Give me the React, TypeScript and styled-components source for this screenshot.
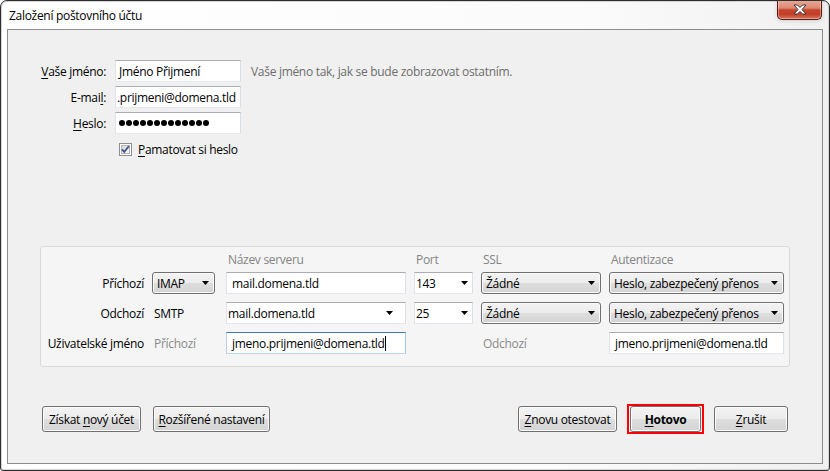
import React from "react";
import styled, { createGlobalStyle, css } from "styled-components";

const GlobalStyle = createGlobalStyle`
  html, body { margin: 0; padding: 0; background: #ffffff; }
  body {
    font-family: "Open Sans", "Noto Sans", "Liberation Sans", sans-serif;
    font-size: 12px;
    letter-spacing: -0.3px;
    color: #000;
  }
`;

const Window = styled.div`
  box-sizing: border-box;
  width: 830px;
  height: 471px;
  display: flex;
  flex-direction: column;
  border: 1px solid #2e2e2e;
  border-radius: 7px 7px 3px 3px;
  background: linear-gradient(to right, #ffffff 0%, #fbfbfb 70%, #f0f0f0 100%);
  box-shadow: inset 0 0 0 1px #d4d4d4;
  overflow: hidden;
`;

const TitleBar = styled.div`
  flex: none;
  height: 28px;
  display: flex;
  align-items: center;
  justify-content: space-between;
  padding: 0 7px 0 8px;
`;

const Title = styled.span`
  line-height: 16px;
  padding-top: 2px;
`;

const CloseButton = styled.div`
  align-self: flex-start;
  margin-top: -1px;
  box-sizing: border-box;
  width: 45px;
  height: 20px;
  border: 1px solid #5a1b10;
  border-top: none;
  border-radius: 0 0 5px 5px;
  background: linear-gradient(to bottom, #e9aa9a 0%, #dc8a76 42%, #c6452e 52%, #c23e28 75%, #d8765d 100%);
  box-shadow: inset 0 0 0 1px rgba(255, 255, 255, 0.35), 0 1px 4px rgba(0, 0, 0, 0.15);
  display: flex;
  align-items: center;
  justify-content: center;
`;

const Client = styled.div`
  flex: 1;
  min-height: 0;
  margin: 0 6px 6px 6px;
  border: 1px solid #8c8c8c;
  background: #f0f0f0;
  display: flex;
  flex-direction: column;
  padding-top: 30px;
`;

const AccountForm = styled.div`
  display: grid;
  grid-template-columns: 84px 126px auto;
  grid-auto-rows: 22px;
  column-gap: 9px;
  row-gap: 4px;
  margin-left: 14px;
  align-items: center;
`;

const FieldLabel = styled.div`
  text-align: right;
  white-space: nowrap;
`;

const Hint = styled.div`
  color: #6d6d6d;
  padding-left: 1px;
  white-space: nowrap;
`;

const Key = styled.span`
  text-decoration: underline;
  text-underline-offset: 2px;
`;

const TextBox = styled.div<{ $focused?: boolean; $end?: boolean; $pad?: number }>`
  box-sizing: border-box;
  height: 22px;
  display: flex;
  align-items: center;
  justify-content: ${(p) => (p.$end ? "flex-end" : "flex-start")};
  padding: 0 3px 0 ${(p) => (p.$pad ?? 3)}px;
  background: #ffffff;
  border: 1px solid;
  border-color: #abadb3 #dbdfe6 #e3e9ef #e2e3ea;
  white-space: nowrap;
  overflow: hidden;
  ${(p) =>
    p.$focused &&
    css`
      border-color: #3d7bad #a4c9e3 #b7d9ed #b5cfe7;
    `}
`;

const Combo = styled(TextBox)<{ $arrowGap?: number }>`
  justify-content: space-between;
  padding-right: ${(p) => p.$arrowGap ?? 4}px;
`;

const Caret = styled.span`
  width: 1px;
  height: 15px;
  background: #000;
`;

const Dots = styled.div`
  display: flex;
  gap: 1px;
`;

const Dot = styled.span`
  width: 6px;
  height: 6px;
  border-radius: 50%;
  background: #000;
`;

const CheckRow = styled.label`
  grid-column: 2 / 4;
  display: flex;
  align-items: center;
  gap: 6px;
  padding-left: 4px;
`;

const ServerPanel = styled.div`
  margin: 86px 32px 0 32px;
  border: 1px solid #dadada;
  border-radius: 3px;
  background: #f5f5f5;
  display: grid;
  grid-template-columns: 97px 66px 180px 59px 120px 175px;
  grid-template-rows: 25px 30px 30px 30px;
  column-gap: 8px;
  padding: 0 5px 4px 6px;
`;

const HeaderCell = styled.div`
  align-self: center;
  padding-left: 2px;
  color: #848484;
  white-space: nowrap;
`;

const RowLabel = styled.div`
  height: 22px;
  display: flex;
  align-items: center;
  justify-content: flex-end;
  white-space: nowrap;
`;

const PlainCell = styled.div<{ $muted?: boolean }>`
  height: 22px;
  display: flex;
  align-items: center;
  padding-left: 2px;
  white-space: nowrap;
  color: ${(p) => (p.$muted ? "#8a8a8a" : "#000")};
`;

const buttonFace = css`
  box-sizing: border-box;
  border: 1px solid #707070;
  border-radius: 3px;
  background: linear-gradient(to bottom, #f3f3f3 0%, #ececec 48%, #dedede 52%, #d3d3d3 100%);
  box-shadow: inset 0 0 0 1px #fbfbfb;
`;

const DropButton = styled.div<{ $w?: number }>`
  ${buttonFace};
  height: 22px;
  width: ${(p) => (p.$w ? `${p.$w}px` : "100%")};
  display: flex;
  align-items: center;
  justify-content: space-between;
  padding: 0 5px 0 4px;
  white-space: nowrap;
`;

const Footer = styled.div`
  margin-top: auto;
  display: flex;
  justify-content: space-between;
  align-items: center;
  padding: 0 34px 29px 34px;
`;

const ButtonGroup = styled.div<{ $gap: number }>`
  display: flex;
  align-items: center;
  gap: ${(p) => p.$gap}px;
`;

const PushButton = styled.div<{ $w: number; $bold?: boolean }>`
  ${buttonFace};
  width: ${(p) => p.$w}px;
  height: 26px;
  display: flex;
  align-items: center;
  justify-content: center;
  white-space: nowrap;
  font-weight: ${(p) => (p.$bold ? "bold" : "normal")};
`;

const DefaultFrame = styled.div`
  border: 2px solid #ff0000;
  padding: 0 1px;
`;

const Arrow = () => (
  <svg width="7" height="4" viewBox="0 0 7 4">
    <path d="M0 0h7L3.5 4z" fill="#000" />
  </svg>
);

const CloseGlyph = () => (
  <svg width="14" height="11" viewBox="0 0 14 11">
    <polygon
      points="1,1 4.5,1 7,3.6 9.5,1 13,1 9,5.5 13,10 9.5,10 7,7.4 4.5,10 1,10 5,5.5"
      fill="#ffffff"
      stroke="#3a3a3a"
      strokeWidth="1"
      strokeLinejoin="round"
    />
  </svg>
);

const CheckBox = () => (
  <svg width="13" height="13" viewBox="0 0 13 13">
    <defs>
      <linearGradient id="cbFill" x1="0" y1="0" x2="1" y2="1">
        <stop offset="0" stopColor="#d6d6d6" />
        <stop offset="1" stopColor="#fafafa" />
      </linearGradient>
    </defs>
    <rect x="0.5" y="0.5" width="12" height="12" fill="#ffffff" stroke="#8e8f8f" />
    <rect x="2.5" y="2.5" width="8" height="8" fill="url(#cbFill)" stroke="#b4b4b4" />
    <path d="M3 6.3l2.3 2.6L10 3" fill="none" stroke="#44578f" strokeWidth="1.8" />
  </svg>
);

export default function App() {
  return (
    <>
      <GlobalStyle />
      <Window>
        <TitleBar>
          <Title>Založení poštovního účtu</Title>
          <CloseButton>
            <CloseGlyph />
          </CloseButton>
        </TitleBar>
        <Client>
          <AccountForm>
            <FieldLabel>
              <Key>V</Key>aše jméno:
            </FieldLabel>
            <TextBox>Jméno Přijmení</TextBox>
            <Hint>Vaše jméno tak, jak se bude zobrazovat ostatním.</Hint>

            <FieldLabel>
              E-mai<Key>l</Key>:
            </FieldLabel>
            <TextBox $pad={1}>.prijmeni@domena.tld</TextBox>
            <div />

            <FieldLabel>
              <Key>H</Key>eslo:
            </FieldLabel>
            <TextBox>
              <Dots>
                {Array.from({ length: 13 }).map((_, i) => (
                  <Dot key={i} />
                ))}
              </Dots>
            </TextBox>
            <div />

            <div />
            <CheckRow>
              <CheckBox />
              <span>
                <Key>P</Key>amatovat si heslo
              </span>
            </CheckRow>
          </AccountForm>

          <ServerPanel>
            <div />
            <div />
            <HeaderCell>Název serveru</HeaderCell>
            <HeaderCell>Port</HeaderCell>
            <HeaderCell>SSL</HeaderCell>
            <HeaderCell>Autentizace</HeaderCell>

            <RowLabel>Příchozí</RowLabel>
            <DropButton $w={63}>
              IMAP <Arrow />
            </DropButton>
            <TextBox $pad={5}>mail.domena.tld</TextBox>
            <Combo $pad={1}>
              143 <Arrow />
            </Combo>
            <DropButton>
              Žádné <Arrow />
            </DropButton>
            <DropButton>
              Heslo, zabezpečený přenos <Arrow />
            </DropButton>

            <RowLabel>Odchozí</RowLabel>
            <PlainCell>SMTP</PlainCell>
            <Combo $pad={1} $arrowGap={12}>
              mail.domena.tld <Arrow />
            </Combo>
            <Combo $pad={1}>
              25 <Arrow />
            </Combo>
            <DropButton>
              Žádné <Arrow />
            </DropButton>
            <DropButton>
              Heslo, zabezpečený přenos <Arrow />
            </DropButton>

            <RowLabel>Uživatelské jméno</RowLabel>
            <PlainCell $muted>Příchozí</PlainCell>
            <TextBox $focused $pad={5}>
              jmeno.prijmeni@domena.tld
              <Caret />
            </TextBox>
            <div />
            <PlainCell $muted>Odchozí</PlainCell>
            <TextBox $pad={5}>jmeno.prijmeni@domena.tld</TextBox>
          </ServerPanel>

          <Footer>
            <ButtonGroup $gap={12}>
              <PushButton $w={99}>
                <span>
                  Získat <Key>n</Key>ový účet
                </span>
              </PushButton>
              <PushButton $w={117}>
                <span>
                  <Key>R</Key>ozšířené nastavení
                </span>
              </PushButton>
            </ButtonGroup>
            <ButtonGroup $gap={10}>
              <PushButton $w={99}>
                <span>
                  <Key>Z</Key>novu otestovat
                </span>
              </PushButton>
              <DefaultFrame>
                <PushButton $w={71} $bold>
                  <span>
                    <Key>H</Key>otovo
                  </span>
                </PushButton>
              </DefaultFrame>
              <PushButton $w={74}>
                <span>
                  <Key>Z</Key>rušit
                </span>
              </PushButton>
            </ButtonGroup>
          </Footer>
        </Client>
      </Window>
    </>
  );
}
